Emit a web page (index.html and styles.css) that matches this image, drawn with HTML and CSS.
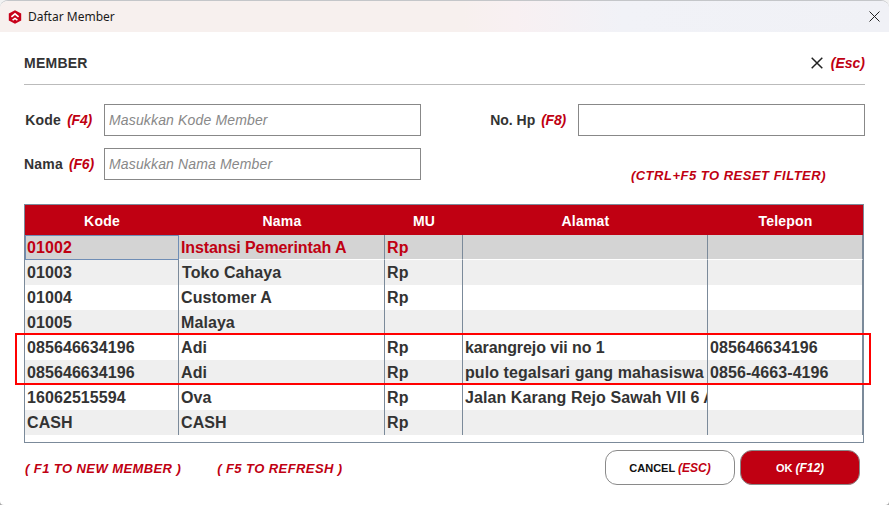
FILE: index.html
```html
<!DOCTYPE html>
<html lang="id">
<head>
<meta charset="utf-8">
<title>Daftar Member</title>
<link rel="stylesheet" href="styles.css">
</head>
<body>
<div class="window">
  <div class="titlebar">
    <svg class="logo" width="14" height="14" viewBox="0 0 14 14" aria-hidden="true">
      <path fill="#c8001a" d="M7 0.3 L13.2 3.5 V10.5 L7 13.7 L0.8 10.5 V3.5 Z"/>
      <path fill="none" stroke="#fff" stroke-width="1.7" d="M3.4 6.8 L7 3.8 L10.6 6.8"/>
      <path fill="none" stroke="#fff" stroke-width="1.5" d="M4.6 10.2 L7 8.4 L9.4 10.2"/>
    </svg>
    <span class="title">Daftar Member</span>
    <svg class="win-close" width="11" height="11" viewBox="0 0 11 11" aria-hidden="true">
      <path d="M0.5 0.5 L10.5 10.5 M10.5 0.5 L0.5 10.5" stroke="#222" stroke-width="1" fill="none"/>
    </svg>
  </div>

  <div class="content">
    <div class="head">
      <h1 class="heading">MEMBER</h1>
      <div class="esc">
        <svg width="12" height="12" viewBox="0 0 12 12" aria-hidden="true">
          <path d="M0.7 0.7 L11.3 11.3 M11.3 0.7 L0.7 11.3" stroke="#222" stroke-width="1.5" fill="none"/>
        </svg>
        <span class="key">(Esc)</span>
      </div>
    </div>

    <div class="filters">
      <div class="field-row">
        <label class="label label-left">Kode <span class="key">(F4)</span></label>
        <input class="input input-left" type="text" placeholder="Masukkan Kode Member">
        <label class="label label-right">No. Hp <span class="key">(F8)</span></label>
        <input class="input input-right" type="text">
      </div>
      <div class="field-row">
        <label class="label label-left">Nama <span class="key">(F6)</span></label>
        <input class="input input-left" type="text" placeholder="Masukkan Nama Member">
        <span class="key reset">(CTRL+F5 TO RESET FILTER)</span>
      </div>
    </div>

    <div class="grid">
      <table class="members">
        <colgroup>
          <col class="c1"><col class="c2"><col class="c3"><col class="c4"><col class="c5">
        </colgroup>
        <thead>
          <tr><th>Kode</th><th>Nama</th><th>MU</th><th>Alamat</th><th>Telepon</th></tr>
        </thead>
        <tbody>
          <tr class="selected"><td class="focus">01002</td><td class="tight">Instansi Pemerintah A</td><td>Rp</td><td></td><td></td></tr>
          <tr class="alt"><td>01003</td><td class="nudge">Toko Cahaya</td><td>Rp</td><td></td><td></td></tr>
          <tr><td>01004</td><td>Customer A</td><td>Rp</td><td></td><td></td></tr>
          <tr class="alt"><td>01005</td><td>Malaya</td><td></td><td></td><td></td></tr>
          <tr><td>085646634196</td><td>Adi</td><td>Rp</td><td class="tight">karangrejo vii no 1</td><td>085646634196</td></tr>
          <tr class="alt"><td>085646634196</td><td>Adi</td><td>Rp</td><td>pulo tegalsari gang mahasiswa 2</td><td>0856-4663-4196</td></tr>
          <tr><td>16062515594</td><td>Ova</td><td>Rp</td><td>Jalan Karang Rejo Sawah VII 6 A</td><td></td></tr>
          <tr class="alt"><td>CASH</td><td>CASH</td><td>Rp</td><td></td><td></td></tr>
        </tbody>
      </table>
    </div>

    <div class="footer">
      <div class="hints">
        <span class="key hint">( F1 TO NEW MEMBER )</span>
        <span class="key hint">( F5 TO REFRESH )</span>
      </div>
      <div class="actions">
        <button class="btn btn-cancel" type="button">CANCEL <em class="key">(ESC)</em></button>
        <button class="btn btn-ok" type="button">OK <em>(F12)</em></button>
      </div>
    </div>
  </div>

  <div class="highlight"></div>
</div>
</body>
</html>
```

FILE: styles.css
```css
* { box-sizing: border-box; }

html, body {
  margin: 0;
  padding: 0;
}

body {
  width: 889px;
  height: 505px;
  overflow: hidden;
  background: linear-gradient(180deg, #f2f2f2 0%, #f2f2f2 50%, #a8a8a8 50%, #a8a8a8 100%);
  font-family: "Liberation Sans", Arial, sans-serif;
  color: #333;
}

.window {
  position: relative;
  width: 889px;
  height: 505px;
  background: #fff;
  border-top: 1px solid #c4c6c9;
  border-radius: 8px 8px 4px 4px;
  overflow: hidden;
}

.titlebar {
  display: flex;
  align-items: center;
  height: 31px;
  padding: 0 9px 0 8px;
  background: linear-gradient(90deg, #f7f0ee 0%, #f7f0ee 52%, #f8f0f2 58%, #f1f2f7 70%, #f0f1f6 100%);
}

.logo { flex: none; }

.title {
  margin-left: 6px;
  font-family: "Noto Sans", sans-serif;
  font-size: 12px;
  color: #1a1a1a;
}

.win-close { margin-left: auto; }

.content { padding: 0 24px; }

.head {
  display: flex;
  align-items: center;
  justify-content: space-between;
  height: 53px;
  padding-top: 9px;
  border-bottom: 1px solid #bbb;
}

.heading {
  margin: 0;
  font-size: 14px;
  font-weight: 700;
  letter-spacing: 0.25px;
  color: #333;
}

.esc {
  display: flex;
  align-items: center;
  gap: 8px;
  font-size: 14px;
}

.key {
  font-weight: 700;
  font-style: italic;
  color: #c00012;
}

.filters {
  display: flex;
  flex-direction: column;
  gap: 12px;
  margin-top: 19px;
}

.field-row {
  display: flex;
  align-items: center;
  height: 32px;
}

.label {
  flex: none;
  font-size: 14px;
  font-weight: 700;
  letter-spacing: 0.2px;
  text-align: right;
  white-space: nowrap;
}

.label .key {
  margin-left: 2px;
  letter-spacing: -0.2px;
}

.label-left { width: 68px; }

.label-right {
  width: 145px;
  letter-spacing: 0;
}

.input {
  flex: none;
  height: 32px;
  padding: 0 4px;
  border: 1px solid #888;
  border-radius: 0;
  background: #fff;
  font-family: inherit;
  font-size: 14px;
  outline: none;
}

.input::placeholder {
  color: #888;
  font-style: italic;
  letter-spacing: 0.15px;
  opacity: 1;
}

.input-left { width: 317px; margin-left: 12px; }
.input-right { width: 287px; margin-left: 12px; }

.reset {
  margin-left: auto;
  margin-right: 39px;
  padding-top: 22px;
  font-size: 13px;
  letter-spacing: 0.5px;
}

.grid {
  width: 840px;
  height: 239px;
  margin-top: 24px;
  border: 1px solid #7b8a9a;
  background: #fff;
}

.members {
  width: 838px;
  table-layout: fixed;
  border-collapse: separate;
  border-spacing: 0;
}

.c1 { width: 154px; }
.c2 { width: 206px; }
.c3 { width: 78px; }
.c4 { width: 245px; }
.c5 { width: 155px; }

.members th {
  height: 30px;
  padding: 1px 0 0;
  background: #c00012;
  color: #fff;
  font-size: 14px;
  font-weight: 700;
  letter-spacing: 0.2px;
}

.members td {
  height: 25px;
  padding: 0 2px;
  border-right: 1px solid #7b8a9a;
  font-size: 16px;
  font-weight: 700;
  letter-spacing: 0.08px;
  line-height: 24px;
  color: #333;
  white-space: nowrap;
  overflow: hidden;
}

.members td.tight { letter-spacing: -0.1px; }

.alt td { background: #efefef; }

.members .selected td {
  padding-top: 1px;
  line-height: 23px;
  background: #d4d4d4;
  border-bottom: 1px solid #fff;
  color: #c00012;
}

.members .selected .focus {
  border: 1px solid #6f8db5;
  padding: 0 1px;
  line-height: 23px;
}

.nudge { text-indent: 1px; }

.footer {
  display: flex;
  align-items: center;
  justify-content: space-between;
  height: 35px;
  margin-top: 7px;
  padding-right: 5px;
}

.hints {
  display: flex;
  gap: 36px;
  padding: 2px 0 0 1px;
}

.hint {
  font-size: 13px;
  letter-spacing: 0.42px;
}

.actions {
  display: flex;
  gap: 5px;
}

.btn {
  height: 35px;
  padding: 0;
  border: 1px solid #8a8a8a;
  border-radius: 12px;
  font-family: inherit;
  font-size: 11px;
  font-weight: 700;
}

.btn em {
  font-size: 12px;
  font-style: italic;
}

.btn-cancel {
  width: 130px;
  background: #fff;
  color: #111;
}

.btn-ok {
  width: 120px;
  background: #c00012;
  color: #fff;
}

.highlight {
  position: absolute;
  left: 15px;
  top: 332px;
  width: 856px;
  height: 52px;
  border: 2px solid #f00;
  pointer-events: none;
}
```
